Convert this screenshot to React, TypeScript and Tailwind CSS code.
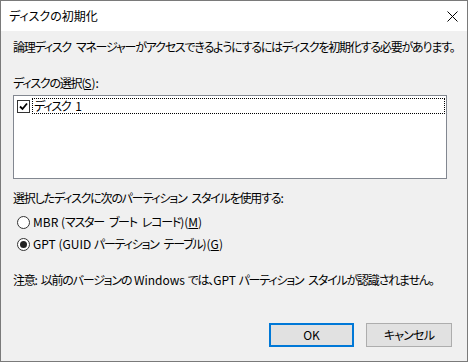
import React from "react";

const font = "[font-family:'Noto_Sans_CJK_JP','Noto_Sans',sans-serif]";

// latin runs keep normal spacing; only the kana are tightened
function L({ children }: { children: React.ReactNode }) {
  return <span className="tracking-normal">{children}</span>;
}

const sp = "\u2002";

function CheckBox() {
  return (
    <div className="flex h-[13px] w-[13px] items-center justify-center border border-[#333333] bg-white">
      <svg width="9" height="9" viewBox="0 0 9 9">
        <path d="M1 4.5 L3.5 7 L8 1.5" fill="none" stroke="#000" strokeWidth="1.8" />
      </svg>
    </div>
  );
}

function Radio({ checked }: { checked?: boolean }) {
  return (
    <div className="flex h-[13px] w-[13px] items-center justify-center rounded-full border border-[#333333] bg-white">
      {checked && <div className="h-[7px] w-[7px] rounded-full bg-[#222222]" />}
    </div>
  );
}

export default function App() {
  return (
    <div
      className={`${font} flex h-[362px] w-[468px] flex-col whitespace-nowrap border border-[#7a7a7a] bg-[#f0f0f0] text-[12px] leading-[16px] tracking-[-1.2px] text-black [font-feature-settings:'palt']`}
    >
      <div className="flex h-[30px] items-center justify-between bg-white pl-[8px] pr-[9px]">
        <span className="tracking-normal">ディスクの初期化</span>
        <svg width="11" height="11" viewBox="0 0 11 11">
          <path d="M0.5 0.5 L10.5 10.5 M10.5 0.5 L0.5 10.5" stroke="#000" strokeWidth="1" />
        </svg>
      </div>

      <div className="flex flex-col pl-[12px] pt-[8px]">
        <p>論理ディスク{sp}マネージャーがアクセスできるようにするにはディスクを初期化する必要があります。</p>

        <p className="mt-[20px]">
          ディスクの選択(<L><span className="underline">S</span>):</L>
        </p>

        <div className="mt-[4px] h-[84px] w-[434px] border border-[#828790] bg-white pl-[2px] pt-[2px]">
          <div className="flex h-[16px] items-center">
            <div className="ml-[1px]">
              <CheckBox />
            </div>
            <div className="ml-[2px] mr-[1px] flex h-[16px] flex-1 items-center border border-dotted border-black pl-[1px]">
              ディスク{sp}<L>1</L>
            </div>
          </div>
        </div>

        <p className="mt-[11px]">選択したディスクに次のパーティション{sp}スタイルを使用する<L>:</L></p>

        <div className="mt-[8px] flex h-[16px] items-center pl-[4px]">
          <Radio />
          <span className="ml-[3px]">
            <L>MBR (</L>マスター{sp}ブート{sp}レコード<L>)(<span className="underline">M</span>)</L>
          </span>
        </div>
        <div className="mt-[6px] flex h-[16px] items-center pl-[4px]">
          <Radio checked />
          <span className="ml-[3px]">
            <L>GPT (GUID </L>パーティション{sp}テーブル<L>)(<span className="underline">G</span>)</L>
          </span>
        </div>

        <p className="mt-[20px]">
          注意<L>: </L>以前のバージョンの<L> Windows </L>では、<L>GPT </L>パーティション{sp}スタイルが認識されません。
        </p>
      </div>

      <div className="mt-[35px] flex justify-end gap-[12px] pr-[15px] tracking-normal">
        <button className="flex h-[24px] w-[85px] items-center justify-center border-2 border-[#0078d7] bg-[#e1e1e1]">
          OK
        </button>
        <button className="flex h-[24px] w-[86px] items-center justify-center border border-[#adadad] bg-[#e1e1e1] tracking-[-0.8px]">
          キャンセル
        </button>
      </div>
    </div>
  );
}
